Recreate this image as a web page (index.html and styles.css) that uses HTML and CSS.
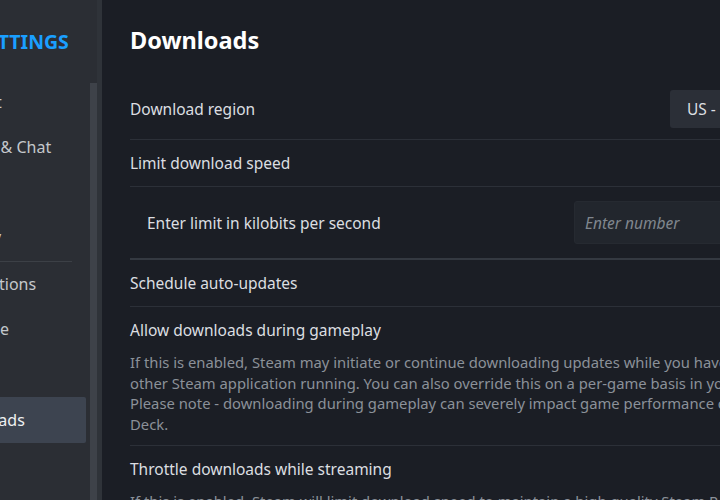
FILE: index.html
```html
<!DOCTYPE html>
<html lang="en">
<head>
<meta charset="utf-8">
<title>Settings - Downloads</title>
<link rel="stylesheet" href="styles.css">
</head>
<body>
<div class="app">
  <aside class="sidebar">
    <nav class="nav">
      <div class="nav-title">SETTINGS</div>
      <ul class="nav-list">
        <li class="nav-item">Account</li>
        <li class="nav-item">Friends &amp; Chat</li>
        <li class="nav-item">Family</li>
        <li class="nav-item">Security</li>
        <li class="nav-sep"></li>
        <li class="nav-item">Notifications</li>
        <li class="nav-item">Interface</li>
        <li class="nav-item">Library</li>
        <li class="nav-item active">Downloads</li>
        <li class="nav-item">Storage</li>
      </ul>
    </nav>
    <div class="scroll"><div class="thumb"></div></div>
    <div class="edge"></div>
  </aside>
  <main class="main">
    <h1 class="page-title">Downloads</h1>
    <div class="rows">
      <div class="row">
        <span class="label">Download region</span>
        <div class="select">US - Seattle</div>
      </div>
      <div class="row">
        <span class="label">Limit download speed</span>
      </div>
      <div class="row sub">
        <span class="label">Enter limit in kilobits per second</span>
        <input class="num" type="text" placeholder="Enter number">
      </div>
      <div class="row">
        <span class="label">Schedule auto-updates</span>
      </div>
      <div class="row block">
        <span class="label">Allow downloads during gameplay</span>
        <p class="desc">If this is enabled, Steam may initiate or continue downloading updates while you have a game or<br>other Steam application running. You can also override this on a per-game basis in your Library.<br>Please note - downloading during gameplay can severely impact game performance on Steam<br>Deck.</p>
      </div>
      <div class="row block">
        <span class="label">Throttle downloads while streaming</span>
        <p class="desc">If this is enabled, Steam will limit download speed to maintain a high quality Steam Remote Play session.</p>
      </div>
    </div>
  </main>
</div>
</body>
</html>
```
FILE: styles.css
```css
html, body {
  margin: 0;
  padding: 0;
  height: 500px;
  overflow: hidden;
  background: #1b1e25;
  font-family: "Noto Sans", "Open Sans", sans-serif;
}

.app {
  display: flex;
  margin-left: -148px;
  width: 1100px;
  height: 500px;
}

.sidebar {
  width: 250px;
  flex: none;
  display: flex;
  background: #2b2e34;
}

.nav {
  width: 234px;
  flex: none;
}

.nav-title {
  padding: 28px 0 0 124px;
  height: 28px;
  line-height: 28px;
  font-size: 19.5px;
  font-weight: 700;
  color: #1a9fff;
  white-space: nowrap;
}

.nav-list {
  list-style: none;
  margin: 24px 0 0;
  padding: 0;
}

.nav-item {
  height: 45px;
  line-height: 45px;
  padding-left: 89px;
  font-size: 16px;
  color: #c4c7cb;
  white-space: nowrap;
  border-radius: 2px;
}

.nav-item.active {
  background: #3d4450;
  color: #eef0f2;
  height: 46px;
  line-height: 46px;
}

.nav-sep {
  height: 1px;
  margin: 1px 14px 0 0;
  background: #3c4046;
}

.scroll {
  width: 7px;
  margin-left: 4px;
  padding-top: 83px;
  display: flex;
  flex-direction: column;
}

.thumb {
  flex: 1;
  background: #3e4249;
}

.edge {
  width: 5px;
  background: #2f3339;
}

.main {
  flex: none;
  width: 800px;
  padding: 24px 0 0 28px;
}

.page-title {
  margin: 0 0 23px;
  height: 32px;
  line-height: 32px;
  font-size: 23.5px;
  font-weight: 700;
  color: #ffffff;
}

.rows {
  width: 720px;
}

.row {
  display: flex;
  align-items: center;
  justify-content: space-between;
  padding: 11px 0;
  border-bottom: 1px solid #2c3038;
  min-height: 24px;
}

.row.sub {
  padding: 14px 0 14px 17px;
  border-bottom: 2px solid #343941;
}

.row.block {
  display: block;
}

.label {
  font-size: 15.5px;
  line-height: 24px;
  color: #dcdee1;
  white-space: nowrap;
}

.select {
  width: 180px;
  height: 38px;
  line-height: 38px;
  padding-left: 17px;
  box-sizing: border-box;
  background: #2b2f37;
  border-radius: 3px;
  font-size: 15.5px;
  color: #dcdee1;
  white-space: nowrap;
  overflow: hidden;
}

.num {
  width: 276px;
  height: 43px;
  box-sizing: border-box;
  padding: 0 10px;
  border: 1px solid #262a31;
  border-radius: 3px;
  background: #22262d;
  font-family: "Noto Sans", "Open Sans", sans-serif;
  font-size: 15.5px;
  color: #dcdee1;
  outline: none;
}

.num::placeholder {
  font-style: italic;
  color: #80868e;
}

.desc {
  margin: 10px 0 0;
  font-size: 14.8px;
  line-height: 20.5px;
  color: #8b9199;
  white-space: nowrap;
}
```
